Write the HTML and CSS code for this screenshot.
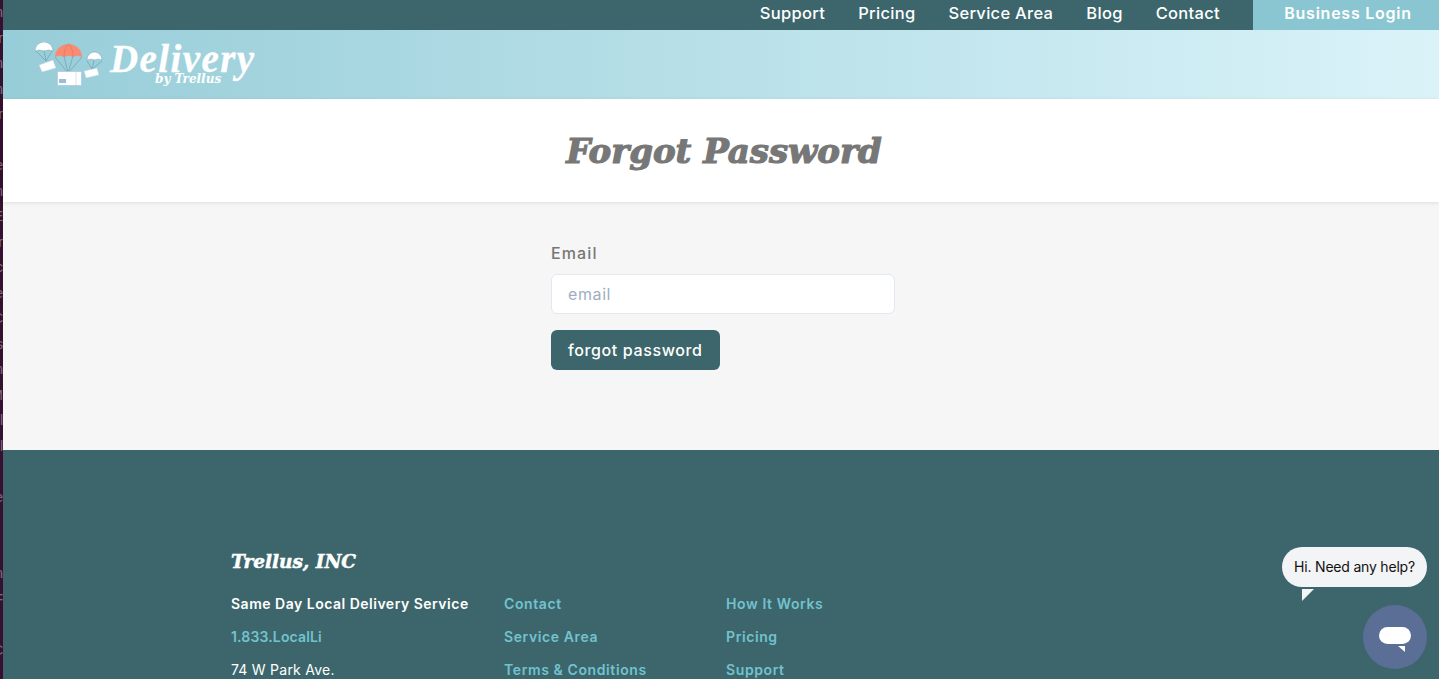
FILE: index.html
```html
<!DOCTYPE html>
<html lang="en">
<head>
<meta charset="utf-8">
<title>Forgot Password - Delivery by Trellus</title>
<link rel="stylesheet" href="styles.css">
</head>
<body>
<div class="shell">
  <aside class="edge" aria-hidden="true">n
r
n
n
r

e
n
E
r
c
e
C
s
n
M
l
l

e


n
F

C</aside>
  <div class="page">
    <nav class="topbar">
      <a class="toplink" href="#">Support</a>
      <a class="toplink" href="#">Pricing</a>
      <a class="toplink" href="#">Service Area</a>
      <a class="toplink" href="#">Blog</a>
      <a class="toplink" href="#">Contact</a>
      <a class="login" href="#">Business Login</a>
    </nav>
    <header class="brandbar">
      <a class="logo" href="#">
        <svg class="logo-mark" viewBox="0 0 68 46" width="68" height="46">
          <g fill="none" stroke="#6f9fb5" stroke-width=".7">
            <path d="M1 9 11 19M17 9 11 19M9 8 11 19"/>
            <path d="M20 15 33 31M47 15 33 31M29 14 33 31M38 14 33 31"/>
            <path d="M52 19 57 27M67 19 57 27M59 18 57 27"/>
          </g>
          <path d="M0 9C0 3 5 0 9 0s9 3 9 9l-4.500-1-4.500 1-4.500-1z" fill="#fff" stroke="#6f9fb5" stroke-width=".5"/>
          <path d="M20 15C20 7 27 2 33.500 2S47 7 47 15l-4.500-1.500L38 15l-4.500-1.500L29 15l-4.500-1.500z" fill="#f98b73"/>
          <path d="M29 15C29 8 31 4 33.500 2 36 4 38 8 38 15" fill="none" stroke="#d9745f" stroke-width=".6"/>
          <path d="M52 18c0-5 4-8 7.500-8S67 13 67 18l-3.700-.8-3.800.8-3.700-.8z" fill="#fff" stroke="#6f9fb5" stroke-width=".5"/>
          <path d="M4 23 18 18 21 26 7 30z" fill="#fff" stroke="#b9cfe0" stroke-width=".5"/>
          <path d="M49 29 62 26 64 33 51 36z" fill="#fff" stroke="#b9cfe0" stroke-width=".5"/>
          <rect x="22.500" y="29.500" width="24" height="14" fill="#fff" stroke="#a9bfdc" stroke-width=".6"/>
          <rect x="24" y="37" width="7" height="4" fill="#9dbcd8"/>
          <path d="M41 30v13" stroke="#c6d6e8" stroke-width=".7"/>
        </svg>
        <span class="wordmark">
          <span class="word-main">Delivery</span>
          <span class="word-sub">by Trellus</span>
        </span>
      </a>
    </header>
    <section class="titleband">
      <h1 class="title">Forgot Password</h1>
    </section>
    <main class="content">
      <form class="form">
        <label class="field-label" for="email">Email</label>
        <input class="field" id="email" type="text" placeholder="email">
        <button class="submit" type="button">forgot password</button>
      </form>
    </main>
    <footer class="footer">
      <h2 class="foot-title">Trellus, INC</h2>
      <div class="foot-cols">
        <ul class="foot-col col-a">
          <li class="foot-strong">Same Day Local Delivery Service</li>
          <li><a class="foot-link foot-phone" href="#">1.833.LocalLi</a></li>
          <li class="foot-text">74 W Park Ave.</li>
        </ul>
        <ul class="foot-col col-b">
          <li><a class="foot-link" href="#">Contact</a></li>
          <li><a class="foot-link" href="#">Service Area</a></li>
          <li><a class="foot-link" href="#">Terms &amp; Conditions</a></li>
        </ul>
        <ul class="foot-col">
          <li><a class="foot-link" href="#">How It Works</a></li>
          <li><a class="foot-link" href="#">Pricing</a></li>
          <li><a class="foot-link" href="#">Support</a></li>
        </ul>
      </div>
    </footer>
  </div>
</div>
<div class="chat">
  <div class="bubble">Hi. Need any help?</div>
  <button class="chat-btn" type="button" aria-label="Open chat">
    <svg viewBox="0 0 32 26" width="32" height="26">
      <rect x="0" y="0" width="32" height="17" rx="8.500" fill="#fff"/>
      <path d="M19 19h7v6z" fill="#fff"/>
    </svg>
  </button>
</div>
</body>
</html>
```
FILE: styles.css
```css
* { box-sizing: border-box; }
html, body { margin: 0; height: 100%; overflow: hidden; }
body { font-family: Inter, "Noto Sans", sans-serif; color: #777; background: #f6f6f7; }
a { text-decoration: none; color: inherit; }

.shell { display: flex; height: 679px; overflow: hidden; }
.edge {
  flex: 0 0 3px;
  width: 3px;
  overflow: hidden;
  background: #35102f;
  color: rgba(255,255,255,.4);
  font: 14px/25.5px "Liberation Sans", sans-serif;
  white-space: pre;
  direction: rtl;
  text-align: left;
}
.page { flex: 1; min-width: 0; }

.topbar { display: flex; justify-content: flex-end; align-items: flex-start; height: 30px; background: #3c666b; }
.toplink { margin-right: 33px; font-size: 16.500px; font-weight: 500; color: #fff; letter-spacing: .3px; line-height: 26px; }
.toplink:last-of-type { margin-right: 32px; }
.login {
  width: 186px;
  height: 30px;
  padding-left: 4px;
  text-align: center;
  font-size: 16px;
  font-weight: 600;
  letter-spacing: .75px;
  line-height: 26px;
  color: #fff;
  background: #8ac6d1;
}

.brandbar { height: 69px; padding: 12px 0 0 32px; background: linear-gradient(90deg, #97cdd8 0%, #daf3f9 100%); }
.logo { display: flex; align-items: flex-start; color: #fff; }
.logo-mark { flex: none; margin-right: 7px; }
.wordmark { display: flex; flex-direction: column; margin-top: 1px; font-family: "Liberation Serif", serif; font-style: italic; font-weight: 700; }
.word-main { font-size: 39px; line-height: 31px; letter-spacing: 1.400px; -webkit-text-stroke: .3px #fff; }
.word-sub { margin: -2px 0 0 45px; font-family: "DejaVu Serif", serif; font-size: 12px; line-height: 14px; }

.titleband { height: 103px; padding-top: 30px; background: #fff; box-shadow: 0 1px 4px rgba(0,0,0,.1); position: relative; text-align: center; }
.title {
  margin: 0;
  padding-left: 6px;
  font-family: "DejaVu Serif", serif;
  font-style: italic;
  font-weight: 700;
  font-size: 34px;
  line-height: 44px;
  color: #777;
  -webkit-text-stroke: 1.200px #777;
}

.content { height: 248px; padding: 41px 0 0 4px; background: #f6f6f7; }
.form { display: flex; flex-direction: column; align-items: flex-start; width: 344px; margin: 0 auto; }
.field-label { font-size: 16px; font-weight: 500; letter-spacing: 1.100px; line-height: 20px; color: #777; margin-bottom: 11px; }
.field {
  width: 100%;
  height: 40px;
  padding: 0 16px;
  border: 1px solid #e2e8f0;
  border-radius: 6px;
  background: #fff;
  font: 400 16px Inter, sans-serif;
  letter-spacing: .6px;
  color: #777;
  outline: none;
}
.field::placeholder { color: #a0aec0; opacity: 1; }
.submit {
  height: 40px;
  margin-top: 16px;
  padding: 0 17px;
  border: 0;
  border-radius: 6px;
  background: #3c666b;
  color: #fff;
  font: 500 16px Inter, sans-serif;
  letter-spacing: .62px;
}

.footer { height: 229px; padding: 100px 0 0 228px; background: #3c666b; color: #fff; }
.foot-title {
  margin: 0 0 21px;
  font-family: "DejaVu Serif", serif;
  font-style: italic;
  font-weight: 700;
  font-size: 18.500px;
  line-height: 24px;
  color: #fff;
  -webkit-text-stroke: .5px #fff;
}
.foot-cols { display: flex; }
.foot-col { list-style: none; margin: 0; padding: 0; font-size: 14px; line-height: 18px; letter-spacing: .6px; }
.foot-col li { margin-bottom: 15px; white-space: nowrap; }
.col-a { width: 273px; }
.col-b { width: 222px; }
.foot-strong { font-weight: 600; color: #fff; letter-spacing: .5px; }
.foot-link { font-weight: 600; color: #72c2cf; }
.foot-phone { letter-spacing: .15px; }
.foot-text { font-weight: 400; color: #fff; letter-spacing: .25px; }

.chat { position: fixed; right: 12px; bottom: 10px; display: flex; flex-direction: column; align-items: flex-end; }
.bubble {
  position: relative;
  width: 145px;
  height: 40px;
  margin-bottom: 18px;
  border-radius: 20px;
  background: #f3f4f6;
  color: #111;
  font: 400 14px/40px Inter, sans-serif;
  letter-spacing: -.2px;
  text-align: center;
}
.bubble::after {
  content: "";
  position: absolute;
  left: 20px;
  top: 42px;
  width: 12px;
  height: 12px;
  background: #f3f4f6;
  clip-path: polygon(0 0, 100% 0, 0 100%);
}
.chat-btn {
  display: flex;
  align-items: center;
  justify-content: center;
  width: 64px;
  height: 64px;
  padding: 5px 0 0;
  border: 0;
  border-radius: 50%;
  background: #5a6e96;
}
```
